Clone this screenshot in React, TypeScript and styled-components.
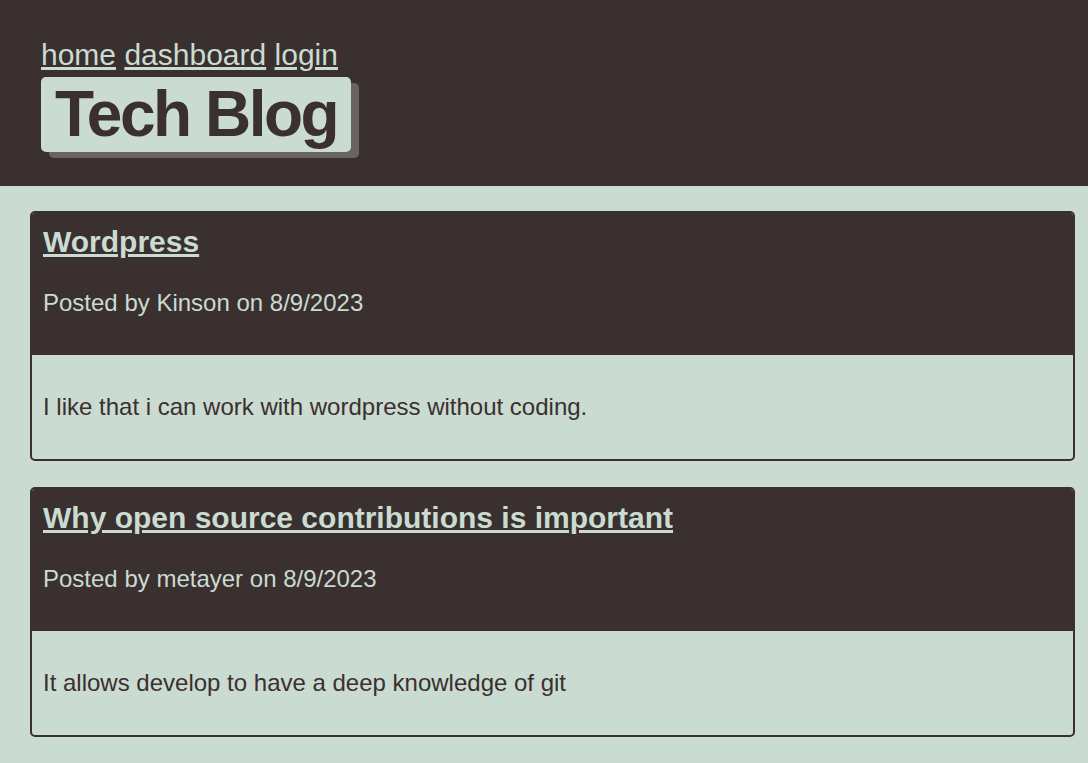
import React from "react";
import styled, { createGlobalStyle } from "styled-components";

const Global = createGlobalStyle`
  html, body { margin: 0; padding: 0; }
  body {
    background: #cadbd1;
    font-family: "Liberation Sans", Arial, sans-serif;
    color: #3a302f;
  }
`;

const Header = styled.header`
  background: #3a302f;
  padding: 38px 41px 34px;
`;

const Nav = styled.nav`
  font-size: 30px;
  line-height: normal;
`;

const NavLink = styled.a`
  color: #cadbd1;
  text-decoration: underline;
`;

const TitleBox = styled.h1`
  display: inline-block;
  margin: 5px 0 0;
  padding: 0 14px 1px 14px;
  background: #cadbd1;
  color: #3a302f;
  font-size: 64px;
  font-weight: 700;
  letter-spacing: -2.5px;
  line-height: normal;
  border-radius: 5px;
  box-shadow: 8px 6px 0 #6b6362;
`;

const Main = styled.main`
  display: flex;
  flex-direction: column;
  gap: 26px;
  padding: 25px 13px 26px 30px;
`;

const Card = styled.article`
  border: 2px solid #3a302f;
  border-radius: 5px;
  overflow: hidden;
`;

const CardHead = styled.div`
  background: #3a302f;
  padding: 12px 11px 38px;
`;

const CardTitle = styled.h2`
  margin: 0 0 30px;
  font-size: 30px;
  font-weight: 700;
  line-height: normal;
  a {
    color: #cadbd1;
    text-decoration: underline;
  }
`;

const Meta = styled.p`
  margin: 0;
  font-size: 24px;
  line-height: normal;
  color: #cadbd1;
`;

const CardBody = styled.div`
  padding: 38px 11px 38px;
`;

const BodyText = styled.p`
  margin: 0;
  font-size: 24px;
  line-height: normal;
  color: #3a302f;
`;

const posts = [
  {
    title: "Wordpress",
    author: "Kinson",
    date: "8/9/2023",
    body: "I like that i can work with wordpress without coding.",
  },
  {
    title: "Why open source contributions is important",
    author: "metayer",
    date: "8/9/2023",
    body: "It allows develop to have a deep knowledge of git",
  },
];

export default function App() {
  return (
    <>
      <Global />
      <Header>
        <Nav>
          <NavLink href="#">home</NavLink> <NavLink href="#">dashboard</NavLink>{" "}
          <NavLink href="#">login</NavLink>
        </Nav>
        <TitleBox>Tech Blog</TitleBox>
      </Header>
      <Main>
        {posts.map((p) => (
          <Card key={p.title}>
            <CardHead>
              <CardTitle>
                <a href="#">{p.title}</a>
              </CardTitle>
              <Meta>
                Posted by {p.author} on {p.date}
              </Meta>
            </CardHead>
            <CardBody>
              <BodyText>{p.body}</BodyText>
            </CardBody>
          </Card>
        ))}
      </Main>
    </>
  );
}
